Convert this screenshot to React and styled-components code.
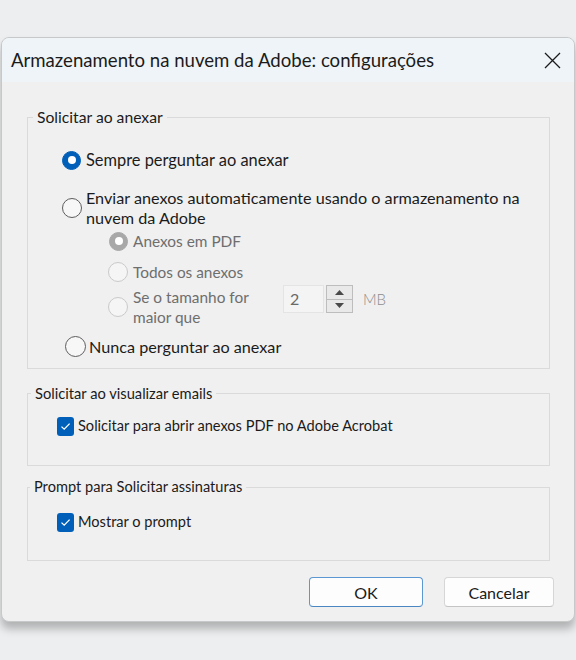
import React from 'react';
import styled, { createGlobalStyle } from 'styled-components';

const GlobalStyle = createGlobalStyle`
  body {
    margin: 0;
    background: #eceeef;
    font-family: Lato, "Noto Sans", sans-serif;
    color: #1b1b1b;
  }
`;

const Page = styled.div`
  height: 660px;
  padding-top: 37px;
  box-sizing: border-box;
  overflow: hidden;
`;

const Dialog = styled.div`
  margin: 0 1px;
  border: 1px solid #c6c8ca;
  border-radius: 8px;
  background: #f0f0f0;
  box-shadow: 0 7px 8px rgba(0, 0, 0, 0.25);
  overflow: hidden;
`;

const TitleBar = styled.div`
  height: 44px;
  background: #eef4f8;
  display: flex;
  align-items: center;
  justify-content: space-between;
  padding: 0 11px 0 9px;
  font-size: 18.6px;
`;

const CloseButton = styled.button`
  width: 21px;
  height: 21px;
  padding: 0;
  border: 0;
  background: none;
  display: flex;
  align-items: center;
  justify-content: center;
`;

const Body = styled.div`
  padding: 25px 24px 14px 25px;
  display: flex;
  flex-direction: column;
`;

const Group = styled.fieldset`
  margin: ${({ $top }) => $top || 0}px 0 0 0;
  padding: 0 0 ${({ $bottom }) => $bottom}px 0;
  border: 1px solid #dadada;
  min-width: 0;
  font-size: ${({ $size }) => $size}px;
`;

const Legend = styled.legend`
  margin-left: ${({ $offset }) => $offset ?? 5}px;
  padding: 0 4px;
  line-height: 20px;
`;

const Option = styled.label`
  display: flex;
  align-items: center;
  margin-top: ${({ $top }) => $top}px;
  margin-left: ${({ $indent }) => $indent}px;
  font-size: ${({ $size }) => $size || 16.2}px;
  line-height: 20px;
  color: ${({ $disabled }) => ($disabled ? '#6e6e6e' : '#1b1b1b')};
`;

const Radio = styled.span`
  flex: none;
  box-sizing: border-box;
  width: ${({ $size }) => $size || 19}px;
  height: ${({ $size }) => $size || 19}px;
  margin-right: ${({ $gap }) => $gap ?? 5}px;
  border-radius: 50%;
  display: flex;
  align-items: center;
  justify-content: center;
  border: 1px solid ${({ $checked, $disabled }) =>
    $disabled ? ($checked ? '#a8a8a8' : '#cacaca') : $checked ? '#005fb8' : '#5d5d5d'};
  background: ${({ $checked, $disabled }) =>
    $checked ? ($disabled ? '#a8a8a8' : '#005fb8') : $disabled ? '#f5f5f5' : '#f7f7f7'};

  &::after {
    content: '';
    display: ${({ $checked }) => ($checked ? 'block' : 'none')};
    width: 8px;
    height: 8px;
    border-radius: 50%;
    background: #ffffff;
  }
`;

const Checkbox = styled.span`
  flex: none;
  width: 17px;
  height: 19px;
  margin-right: 4px;
  border-radius: 3px;
  background: #005fb8;
  display: flex;
  align-items: center;
  justify-content: center;
`;

const SizeLabel = styled.span`
  width: 150px;
`;

const Spinner = styled.div`
  align-self: flex-start;
  margin-top: -2px;
  display: flex;
  align-items: center;
`;

const SpinInput = styled.div`
  box-sizing: border-box;
  width: 41px;
  height: 28px;
  padding-left: 6px;
  background: #f4f4f4;
  border: 1px solid #e4e4e4;
  font-size: 16px;
  line-height: 26px;
  color: #6a6a6a;
`;

const SpinButtons = styled.div`
  margin-left: 2px;
  width: 27px;
  height: 28px;
  display: flex;
  flex-direction: column;
  border: 1px solid #bdbdbd;
  box-sizing: border-box;
`;

const SpinButton = styled.div`
  flex: 1;
  background: #e9e9e9;
  display: flex;
  align-items: center;
  justify-content: center;
  & + & {
    border-top: 1px solid #bdbdbd;
  }
`;

const Unit = styled.span`
  margin-left: 10px;
  font-size: 15px;
  color: #8c8c8c;
  font-weight: 300;
`;

const Footer = styled.div`
  display: flex;
  justify-content: flex-end;
  gap: 21px;
  margin: 16px -4px 0 0;
`;

const Button = styled.button`
  box-sizing: border-box;
  width: ${({ $width }) => $width}px;
  height: 30px;
  border-radius: 4px;
  background: #fdfdfd;
  border: 1px solid ${({ $primary }) => ($primary ? '#5b97d0' : '#d6d6d6')};
  border-bottom-color: ${({ $primary }) => ($primary ? '#4a86c2' : '#c4c4c4')};
  font-family: inherit;
  font-size: 16px;
  color: #1b1b1b;
`;

const Triangle = ({ up }) => (
  <svg width="9" height="5" viewBox="0 0 9 5">
    <path d={up ? 'M0 5 L4.5 0 L9 5 Z' : 'M0 0 L4.5 5 L9 0 Z'} fill="#4a4a4a" />
  </svg>
);

const Check = () => (
  <svg width="11" height="9" viewBox="0 0 11 9">
    <path d="M1.5 4.6 L4.2 7.2 L9.6 1.6" fill="none" stroke="#fff" strokeWidth="1.3" />
  </svg>
);

const App = () => (
  <Page>
    <GlobalStyle />
    <Dialog>
      <TitleBar>
        <span>Armazenamento na nuvem da Adobe: configurações</span>
        <CloseButton type="button" aria-label="Fechar">
          <svg width="17" height="17" viewBox="0 0 17 17">
            <path d="M1 1 L16 16 M16 1 L1 16" stroke="#1b1b1b" strokeWidth="1.3" />
          </svg>
        </CloseButton>
      </TitleBar>
      <Body>
        <Group $bottom={11} $size={15.7}>
          <Legend>Solicitar ao anexar</Legend>
          <Option $top={23} $indent={34} $size={16.4}>
            <Radio $checked />
            Sempre perguntar ao anexar
          </Option>
          <Option $top={18} $indent={34}>
            <Radio $size={20} $gap={4} />
            <span>
              Enviar anexos automaticamente usando o armazenamento na
              <br />
              nuvem da Adobe
            </span>
          </Option>
          <Option $top={3} $indent={81} $size={15.4} $disabled>
            <Radio $checked $disabled />
            Anexos em PDF
          </Option>
          <Option $top={11} $indent={80} $size={15.4} $disabled>
            <Radio $size={20} $disabled />
            Todos os anexos
          </Option>
          <Option $top={5} $indent={80} $size={15.4} $disabled>
            <Radio $size={20} $disabled />
            <SizeLabel>
              Se o tamanho for
              <br />
              maior que
            </SizeLabel>
            <Spinner>
              <SpinInput>2</SpinInput>
              <SpinButtons>
                <SpinButton>
                  <Triangle up />
                </SpinButton>
                <SpinButton>
                  <Triangle />
                </SpinButton>
              </SpinButtons>
              <Unit>MB</Unit>
            </Spinner>
          </Option>
          <Option $top={9} $indent={37}>
            <Radio $size={21} $gap={3} />
            Nunca perguntar ao anexar
          </Option>
        </Group>
        <Group $top={14} $bottom={29} $size={14.7}>
          <Legend $offset={3}>Solicitar ao visualizar emails</Legend>
          <Option $top={13} $indent={29} $size={14.6}>
            <Checkbox>
              <Check />
            </Checkbox>
            Solicitar para abrir anexos PDF no Adobe Acrobat
          </Option>
        </Group>
        <Group $top={11} $bottom={28} $size={14.6}>
          <Legend $offset={2}>Prompt para Solicitar assinaturas</Legend>
          <Option $top={15} $indent={29} $size={14.6}>
            <Checkbox>
              <Check />
            </Checkbox>
            Mostrar o prompt
          </Option>
        </Group>
        <Footer>
          <Button type="button" $primary $width={114}>
            OK
          </Button>
          <Button type="button" $width={110}>
            Cancelar
          </Button>
        </Footer>
      </Body>
    </Dialog>
  </Page>
);

export default App;
